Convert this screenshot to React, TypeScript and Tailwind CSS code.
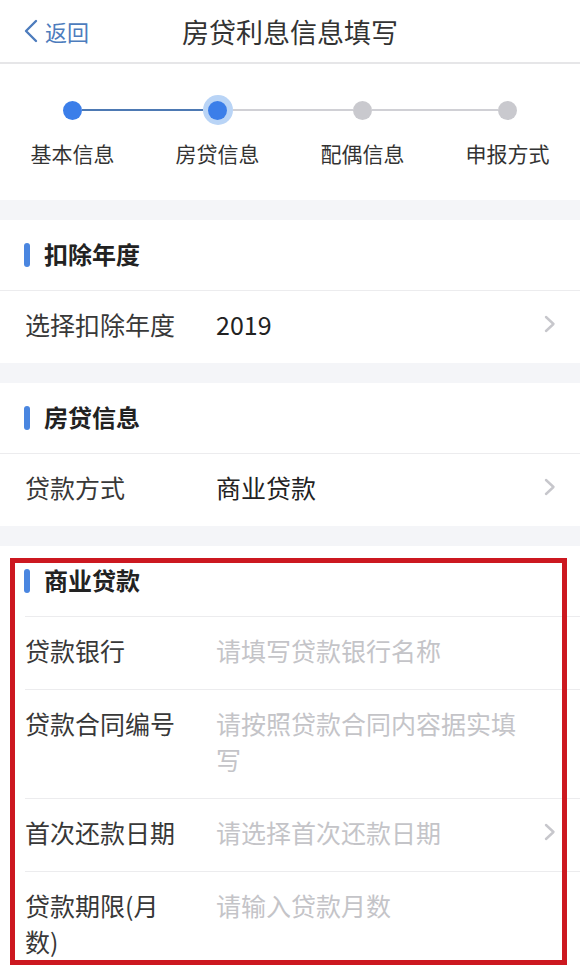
const font = { fontFamily: '"Noto Sans CJK SC", "Noto Sans", sans-serif' };

type Step = { label: string; left: string; right: string; state: "done" | "active" | "todo" };

const steps: Step[] = [
  { label: "基本信息", left: "bg-transparent", right: "bg-[#4d79b3]", state: "done" },
  { label: "房贷信息", left: "bg-[#4d79b3]", right: "bg-[#d0d0d5]", state: "active" },
  { label: "配偶信息", left: "bg-[#d0d0d5]", right: "bg-[#d0d0d5]", state: "todo" },
  { label: "申报方式", left: "bg-[#d0d0d5]", right: "bg-transparent", state: "todo" },
];

function Chevron() {
  return (
    <svg width="12" height="18" viewBox="0 0 12 18" fill="none">
      <path d="M2 2 L9.5 9 L2 16" stroke="#c7c7cc" strokeWidth="2.4" strokeLinecap="round" strokeLinejoin="round" />
    </svg>
  );
}

function SectionTitle({ title, inset }: { title: string; inset?: boolean }) {
  return (
    <div className="flex flex-col">
      <div className="flex h-[70px] items-center pl-[24px]">
        <span className="h-[24px] w-[6px] rounded-full bg-[#4a86e0]" />
        <span className="ml-[14px] -mt-[2px] text-[24px] font-bold leading-none text-[#222]">{title}</span>
      </div>
      <div className={`h-px bg-[#ececee] ${inset ? "ml-[25px]" : ""}`} />
    </div>
  );
}

function Row({
  label,
  value,
  placeholder,
  arrow,
  divider,
}: {
  label: string;
  value?: string;
  placeholder?: string;
  arrow?: boolean;
  divider?: boolean;
}) {
  return (
    <div className="flex flex-col">
      <div className="flex items-start pt-[15px] pb-[21px] pr-[24px] pl-[25px] text-[25px] leading-[36px]">
        <div className="w-[166px] shrink-0 text-[#383838]">{label}</div>
        <div className="ml-[25px] min-w-0 flex-1">
          {value ? (
            <span className="text-[#222]">{value}</span>
          ) : (
            <span className="text-[#c4c4c8]">{placeholder}</span>
          )}
        </div>
        <div className="ml-[8px] flex h-[36px] w-[12px] shrink-0 items-center">{arrow && <Chevron />}</div>
      </div>
      {divider && <div className="ml-[25px] h-px bg-[#ececee]" />}
    </div>
  );
}

export default function App() {
  return (
    <div className="min-h-screen w-[580px] bg-[#f4f5f8]" style={font}>
      <header className="grid h-[64px] grid-cols-[1fr_auto_1fr] items-center border-b-2 border-[#e6e6e8] bg-white">
        <div className="flex items-center pl-[23px] text-[#4d7cbd]">
          <svg width="16" height="24" viewBox="0 0 16 24" fill="none">
            <path d="M13 2 L3 12 L13 22" stroke="#4d7cbd" strokeWidth="2.4" strokeLinecap="round" strokeLinejoin="round" />
          </svg>
          <span className="ml-[6px] text-[22px] leading-none">返回</span>
        </div>
        <h1 className="text-[27px] font-normal leading-none text-[#333]">房贷利息信息填写</h1>
        <div />
      </header>

      <section className="grid h-[136px] grid-cols-4 bg-white pt-[31px]">
        {steps.map((s) => (
          <div key={s.label} className="flex flex-col items-center">
            <div className="flex h-[30px] w-full items-center">
              <div className={`h-[2px] flex-1 ${s.left}`} />
              {s.state === "active" ? (
                <div className="flex h-[30px] w-[30px] items-center justify-center rounded-full bg-[#b9d4f6]">
                  <div className="h-[19px] w-[19px] rounded-full bg-[#3b7ee9]" />
                </div>
              ) : (
                <div
                  className={`h-[19px] w-[19px] rounded-full ${s.state === "done" ? "bg-[#3b7ee9]" : "bg-[#c9c9ce]"}`}
                />
              )}
              <div className={`h-[2px] flex-1 ${s.right}`} />
            </div>
            <div className="mt-[14px] text-[21px] leading-[28px] text-[#333]">{s.label}</div>
          </div>
        ))}
      </section>

      <div className="mt-[20px] bg-white">
        <SectionTitle title="扣除年度" />
        <Row label="选择扣除年度" value="2019" arrow />
      </div>

      <div className="mt-[20px] bg-white">
        <SectionTitle title="房贷信息" />
        <Row label="贷款方式" value="商业贷款" arrow />
      </div>

      <div className="relative mt-[20px] bg-white">
        <SectionTitle title="商业贷款" inset />
        <Row label="贷款银行" placeholder="请填写贷款银行名称" divider />
        <Row label="贷款合同编号" placeholder="请按照贷款合同内容据实填写" divider />
        <Row label="首次还款日期" placeholder="请选择首次还款日期" arrow divider />
        <Row label="贷款期限(月数)" placeholder="请输入贷款月数" />
        <div className="pointer-events-none absolute top-[12px] right-[13px] bottom-[15px] left-[10px] border-[5px] border-[#cc1820]" />
      </div>
    </div>
  );
}
